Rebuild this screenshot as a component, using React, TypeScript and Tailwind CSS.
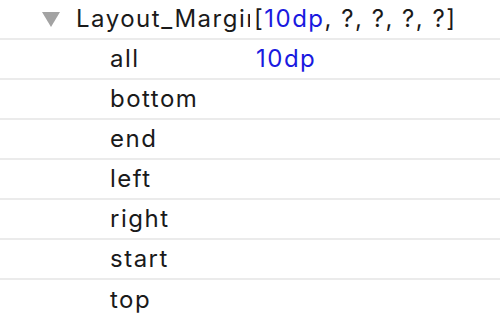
import React from "react";

const children = ["all", "bottom", "end", "left", "right", "start", "top"];

export default function App() {
  return (
    <div
      className="w-[500px] h-[318px] overflow-hidden bg-white text-[24px] tracking-[1.5px] text-[#1a1a1a]"
      style={{ fontFamily: "Inter, 'Open Sans', sans-serif" }}
    >
      <div className="grid grid-cols-[250px_1fr] h-[40px] border-b-2 border-[#ebebeb] items-center">
        <div className="flex items-center overflow-hidden whitespace-nowrap">
          <svg width="18" height="15" viewBox="0 0 18 15" className="ml-[42px] mr-[16px] shrink-0">
            <polygon points="0,0 18,0 9,15" fill="#a3a3a3" />
          </svg>
          <span>Layout_Margin</span>
        </div>
        <div className="pl-[4px] whitespace-nowrap">
          [<span className="text-[#1a1ae0]">10dp</span>, ?, ?, ?, ?]
        </div>
      </div>
      {children.map((c, i) => (
        <div
          key={c}
          className={`grid grid-cols-[250px_1fr] h-[40px] items-center ${i < children.length - 1 ? "border-b-2 border-[#ebebeb]" : ""}`}
        >
          <div className="pl-[110px] whitespace-nowrap overflow-hidden">{c}</div>
          <div className="pl-[6px] text-[#1a1ae0]">{c === "all" ? "10dp" : ""}</div>
        </div>
      ))}
    </div>
  );
}
